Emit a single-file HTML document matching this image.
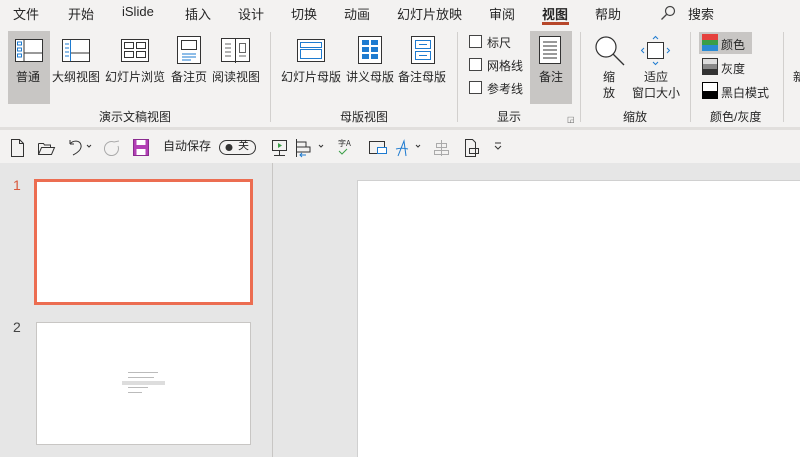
<!DOCTYPE html>
<html><head><meta charset="utf-8"><style>
*{margin:0;padding:0;box-sizing:border-box}
body{width:800px;height:457px;overflow:hidden;background:#e6e6e6;font-family:"Liberation Sans","Noto Sans CJK SC",sans-serif;color:#262626;position:relative}
.a{position:absolute;white-space:nowrap}
.t{font-size:13px}
.s{font-size:12px}
svg{position:absolute}
</style></head><body>
<div class="a" style="left:0;top:0;width:800px;height:127px;background:#f3f2f1"></div>
<div class="a" style="left:0;top:127px;width:800px;height:3px;background:#e1dfdd"></div>
<div class="a" style="left:0;top:130px;width:800px;height:33px;background:#f3f2f1"></div>
<!-- tabs -->
<div class="a t" style="left:13px;top:4px">文件</div>
<div class="a t" style="left:68px;top:4px">开始</div>
<div class="a t" style="left:122px;top:4px">iSlide</div>
<div class="a t" style="left:185px;top:4px">插入</div>
<div class="a t" style="left:238px;top:4px">设计</div>
<div class="a t" style="left:291px;top:4px">切换</div>
<div class="a t" style="left:344px;top:4px">动画</div>
<div class="a t" style="left:397px;top:4px">幻灯片放映</div>
<div class="a t" style="left:489px;top:4px">审阅</div>
<div class="a t" style="left:542px;top:4px;font-weight:bold">视图</div>
<div class="a" style="left:542px;top:22px;width:27px;height:3px;background:#b7472a"></div>
<div class="a t" style="left:595px;top:4px">帮助</div>
<svg style="left:660px;top:5px" width="16" height="16"><circle cx="10" cy="6" r="4.5" fill="none" stroke="#444" stroke-width="1.2"/><line x1="6.5" y1="9.5" x2="1.5" y2="14.5" stroke="#444" stroke-width="1.3"/></svg>
<div class="a t" style="left:688px;top:4px">搜索</div>
<!-- group 1 -->
<div class="a" style="left:8px;top:31px;width:42px;height:73px;background:#c8c6c4"></div>
<svg style="left:15px;top:38px" width="130" height="26">
<rect x="0.5" y="1.5" width="27" height="22" fill="#fff" stroke="#333"/><line x1="9" y1="2" x2="9" y2="23" stroke="#333"/><line x1="9" y1="15" x2="27" y2="15" stroke="#333"/>
<rect x="2.5" y="4" width="4" height="3" fill="none" stroke="#1e7bd0"/><rect x="2.5" y="10" width="4" height="3" fill="none" stroke="#1e7bd0"/><rect x="2.5" y="16" width="4" height="3" fill="none" stroke="#1e7bd0"/>
</svg>
<svg style="left:62px;top:38px" width="30" height="26"><rect x="0.5" y="1.5" width="27" height="22" fill="#fff" stroke="#333"/><line x1="8.5" y1="2" x2="8.5" y2="23" stroke="#1e7bd0"/><line x1="9" y1="15" x2="27" y2="15" stroke="#333"/><line x1="3" y1="6" x2="7" y2="6" stroke="#1e7bd0"/><line x1="3" y1="10" x2="7" y2="10" stroke="#1e7bd0"/><line x1="3" y1="14" x2="7" y2="14" stroke="#1e7bd0"/><line x1="3" y1="18" x2="7" y2="18" stroke="#1e7bd0"/></svg>
<svg style="left:121px;top:38px" width="30" height="26"><rect x="0.5" y="1.5" width="27" height="22" fill="#fff" stroke="#333"/><rect x="3.5" y="4.5" width="9" height="6" fill="none" stroke="#333"/><rect x="15.5" y="4.5" width="9" height="6" fill="none" stroke="#333"/><rect x="3.5" y="13.5" width="9" height="6" fill="none" stroke="#333"/><rect x="15.5" y="13.5" width="9" height="6" fill="none" stroke="#333"/></svg>
<svg style="left:177px;top:36px" width="26" height="30"><rect x="0.5" y="0.5" width="23" height="27" fill="#fff" stroke="#333"/><rect x="4.5" y="4.5" width="15" height="9" fill="none" stroke="#333"/><line x1="5" y1="18" x2="19" y2="18" stroke="#1e7bd0"/><line x1="5" y1="21" x2="19" y2="21" stroke="#1e7bd0"/><line x1="5" y1="24" x2="14" y2="24" stroke="#1e7bd0"/></svg>
<svg style="left:221px;top:37px" width="30" height="28"><rect x="0.5" y="1.5" width="28" height="23" fill="#fff" stroke="#333"/><line x1="14.5" y1="1" x2="14.5" y2="26" stroke="#333"/><line x1="4" y1="7" x2="10" y2="7" stroke="#666"/><line x1="4" y1="11" x2="10" y2="11" stroke="#666"/><line x1="4" y1="15" x2="10" y2="15" stroke="#666"/><line x1="4" y1="19" x2="10" y2="19" stroke="#666"/><rect x="18.5" y="6.5" width="6" height="9" fill="none" stroke="#666"/><line x1="18" y1="19" x2="25" y2="19" stroke="#666"/></svg>
<div class="a s" style="left:16px;top:68px">普通</div>
<div class="a s" style="left:52px;top:68px">大纲视图</div>
<div class="a s" style="left:105px;top:68px">幻灯片浏览</div>
<div class="a s" style="left:171px;top:68px">备注页</div>
<div class="a s" style="left:212px;top:68px">阅读视图</div>
<div class="a s" style="left:99px;top:108px">演示文稿视图</div>
<div class="a" style="left:270px;top:32px;width:1px;height:90px;background:#d2d0ce"></div>
<!-- group 2 -->
<svg style="left:297px;top:38px" width="30" height="26"><rect x="0.5" y="1.5" width="27" height="22" fill="#fff" stroke="#333"/><rect x="3.5" y="4.5" width="21" height="5" fill="none" stroke="#1e7bd0"/><rect x="3.5" y="11.5" width="21" height="9" fill="none" stroke="#1e7bd0"/></svg>
<svg style="left:358px;top:36px" width="26" height="30"><rect x="0.5" y="0.5" width="23" height="27" fill="#fff" stroke="#333"/><g fill="#1e7bd0"><rect x="4" y="4" width="7" height="5"/><rect x="13" y="4" width="7" height="5"/><rect x="4" y="11" width="7" height="5"/><rect x="13" y="11" width="7" height="5"/><rect x="4" y="18" width="7" height="5"/><rect x="13" y="18" width="7" height="5"/></g></svg>
<svg style="left:411px;top:36px" width="26" height="30"><rect x="0.5" y="0.5" width="23" height="27" fill="#fff" stroke="#333"/><rect x="4.5" y="4.5" width="15" height="8" fill="none" stroke="#1e7bd0"/><rect x="4.5" y="15.5" width="15" height="8" fill="none" stroke="#1e7bd0"/><line x1="8" y1="8.5" x2="16" y2="8.5" stroke="#1e7bd0"/><line x1="8" y1="19.5" x2="16" y2="19.5" stroke="#1e7bd0"/></svg>
<div class="a s" style="left:281px;top:68px">幻灯片母版</div>
<div class="a s" style="left:346px;top:68px">讲义母版</div>
<div class="a s" style="left:398px;top:68px">备注母版</div>
<div class="a s" style="left:340px;top:108px">母版视图</div>
<div class="a" style="left:457px;top:32px;width:1px;height:90px;background:#d2d0ce"></div>
<!-- show -->
<div class="a" style="left:469px;top:35px;width:13px;height:13px;border:1px solid #444;background:#fff"></div>
<div class="a" style="left:469px;top:58px;width:13px;height:13px;border:1px solid #444;background:#fff"></div>
<div class="a" style="left:469px;top:81px;width:13px;height:13px;border:1px solid #444;background:#fff"></div>
<div class="a s" style="left:487px;top:34px">标尺</div>
<div class="a s" style="left:487px;top:57px">网格线</div>
<div class="a s" style="left:487px;top:80px">参考线</div>
<div class="a" style="left:530px;top:31px;width:42px;height:73px;background:#c8c6c4"></div>
<svg style="left:539px;top:36px" width="24" height="30"><rect x="0.5" y="0.5" width="21" height="27" fill="#fff" stroke="#333"/><g stroke="#333"><line x1="4" y1="6" x2="18" y2="6"/><line x1="4" y1="10" x2="18" y2="10"/><line x1="4" y1="14" x2="18" y2="14"/><line x1="4" y1="18" x2="18" y2="18"/><line x1="4" y1="22" x2="18" y2="22"/></g></svg>
<div class="a s" style="left:539px;top:68px">备注</div>
<div class="a s" style="left:497px;top:108px">显示</div>
<div class="a" style="left:567px;top:115px;font-size:8px;color:#666">◲</div>
<div class="a" style="left:580px;top:32px;width:1px;height:90px;background:#d2d0ce"></div>
<!-- zoom -->
<svg style="left:594px;top:35px" width="32" height="32"><circle cx="12" cy="12" r="10" fill="#fff" stroke="#333" stroke-width="1.2"/><line x1="19" y1="19" x2="30" y2="30" stroke="#333" stroke-width="1.3"/></svg>
<svg style="left:640px;top:35px" width="32" height="32"><rect x="7.5" y="7.5" width="16" height="16" fill="#fff" stroke="#333"/><g fill="none" stroke="#1e7bd0"><path d="M13 4l2.5-2.5L18 4"/><path d="M13 27l2.5 2.5L18 27"/><path d="M4 13l-2.5 2.5L4 18"/><path d="M27 13l2.5 2.5L27 18"/></g></svg>
<div class="a s" style="left:603px;top:68px">缩</div>
<div class="a s" style="left:603px;top:84px">放</div>
<div class="a s" style="left:644px;top:68px">适应</div>
<div class="a s" style="left:632px;top:84px">窗口大小</div>
<div class="a s" style="left:623px;top:108px">缩放</div>
<div class="a" style="left:690px;top:32px;width:1px;height:90px;background:#d2d0ce"></div>
<!-- color -->
<div class="a" style="left:699px;top:32px;width:53px;height:22px;background:#c8c6c4"></div>
<svg style="left:702px;top:34px" width="16" height="18"><rect width="16" height="6" fill="#e5403c"/><rect y="6" width="16" height="5" fill="#3a9e48"/><rect y="11" width="16" height="6" fill="#2a8ad4"/></svg>
<svg style="left:702px;top:58px" width="16" height="18"><rect width="16" height="6" fill="#ddd"/><rect y="6" width="16" height="5" fill="#888"/><rect y="11" width="16" height="6" fill="#333"/><rect x="0.5" y="0.5" width="15" height="16" fill="none" stroke="#333"/></svg>
<svg style="left:702px;top:82px" width="16" height="18"><rect width="16" height="9" fill="#fff"/><rect y="9" width="16" height="8" fill="#000"/><rect x="0.5" y="0.5" width="15" height="16" fill="none" stroke="#000"/></svg>
<div class="a s" style="left:721px;top:36px">颜色</div>
<div class="a s" style="left:721px;top:60px">灰度</div>
<div class="a s" style="left:721px;top:84px">黑白模式</div>
<div class="a s" style="left:710px;top:108px">颜色/灰度</div>
<div class="a" style="left:783px;top:32px;width:1px;height:90px;background:#d2d0ce"></div>
<div class="a s" style="left:793px;top:68px">新</div>
<!-- QAT -->
<svg style="left:8px;top:137px" width="500" height="22" fill="none" stroke="#333" stroke-width="1">
<path d="M3.5 2.5h8l4 4v13h-12z M11.5 2.5v4h4"/>
<path d="M30.5 6.5v11h13l3-7h-13l-3 7 M30.5 6.5h5l1 1.5h6v2.5"/>
<path d="M62 7c3-4 10-4 11 1s-4 8-8 10 M62 7l0-4 M62 7l4 0"/>
<path d="M79 8l2 2 2-2" />
<path d="M110 9a7 7 0 1 1-4-4 M106 5l5-1" stroke="#aaa"/>
<rect x="125.5" y="2.5" width="15" height="16" fill="#b23fb5" stroke="#8a2b8f"/>
<rect x="128.5" y="3" width="9" height="5" fill="#fff" stroke="none"/><rect x="128.5" y="12" width="9" height="6" fill="#fff" stroke="none"/>
<rect x="211.5" y="3.5" width="36" height="14" rx="7"/>
<circle cx="221" cy="10.5" r="3" fill="#333"/>
<path d="M264.5 3.5h14v10h-14z M271.5 13.5v5 M266 18.5h11"/><path d="M270 6l4 2.5-4 2.5z" fill="#3a9e48" stroke="none"/>
<path d="M288.5 2v18 M289 5h9v5h-9 M289 10h13v5h-13"/><path d="M292 18h6 M294 16l-2 2 2 2" stroke="#1e7bd0"/>
<path d="M311 8l2 2 2-2"/>
<text x="330" y="9" font-size="8" fill="#333" stroke="none" font-family="Noto Sans CJK SC">字A</text><path d="M331 14l3 3 5-5" stroke="#3a9e48"/>
<path d="M361.5 4.5h15v12h-15z"/><rect x="369.5" y="10.5" width="9" height="6" fill="#fff" stroke="#1e7bd0"/>
<path d="M390 19l6-15 2 15 M388 12c4-1 8-1 12 0" stroke="#1e7bd0"/>
<path d="M408 8l2 2 2-2"/>
<path d="M433.5 3v16 M428.5 6.5h10v4h-10z M426.5 13.5h14v4h-14z" stroke="#aaa"/>
<path d="M457.5 2.5h7l3 3v14h-10z M461.5 11.5h9v5h-9z"/>
<path d="M487 6h6 M487 9l3 3 3-3"/>
</svg>
<div class="a s" style="left:163px;top:137px">自动保存</div>
<div class="a" style="left:238px;top:137px;font-size:11px">关</div>
<!-- panels -->
<div class="a" style="left:272px;top:163px;width:1px;height:294px;background:#c8c6c4"></div>
<div class="a" style="left:13px;top:177px;font-size:14px;color:#d9583b">1</div>
<div class="a" style="left:34px;top:179px;width:219px;height:126px;border:3px solid #ec6d51;background:#fff"></div>
<div class="a" style="left:13px;top:319px;font-size:14px;color:#444">2</div>
<div class="a" style="left:36px;top:322px;width:215px;height:123px;border:1px solid #c8c6c4;background:#fff"></div>
<div class="a" style="left:128px;top:372px;width:30px;height:1px;background:#bbb"></div>
<div class="a" style="left:128px;top:377px;width:26px;height:1px;background:#bbb"></div>
<div class="a" style="left:122px;top:381px;width:43px;height:4px;background:#ddd"></div>
<div class="a" style="left:128px;top:387px;width:20px;height:1px;background:#bbb"></div>
<div class="a" style="left:128px;top:392px;width:14px;height:1px;background:#bbb"></div>
<div class="a" style="left:357px;top:180px;width:443px;height:277px;border-left:1px solid #d0d0d0;border-top:1px solid #d0d0d0;background:#fff"></div>
</body></html>
